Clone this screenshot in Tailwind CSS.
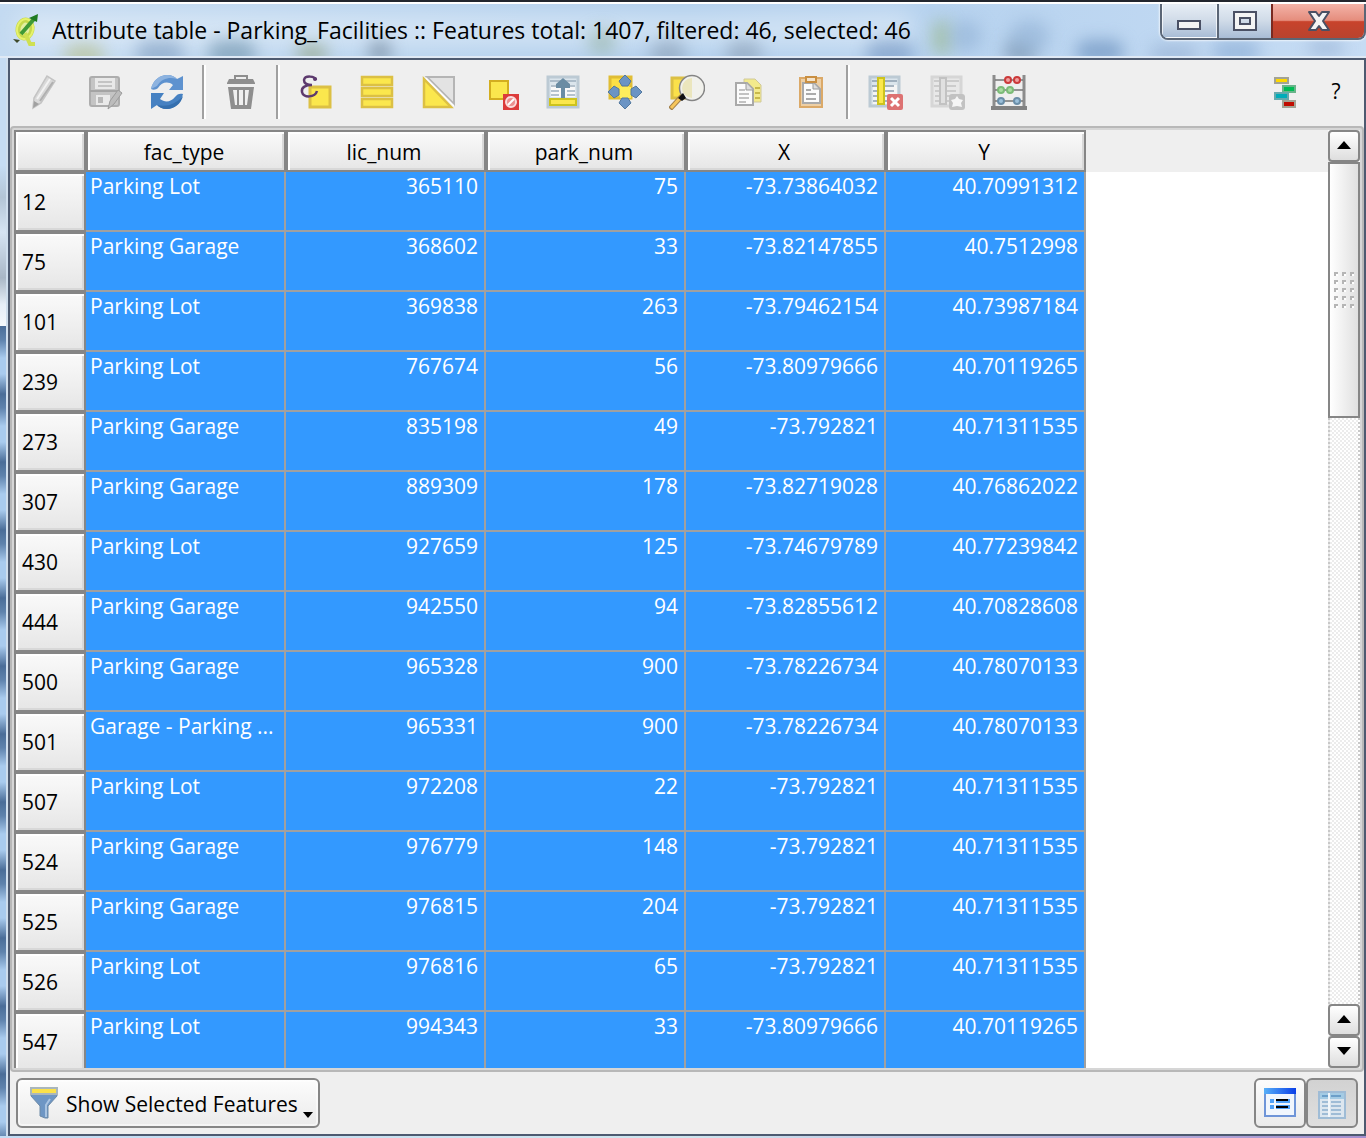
<!DOCTYPE html>
<html lang="en">
<head>
<meta charset="utf-8">
<title>Attribute table - Parking_Facilities</title>
<script src="https://cdn.jsdelivr.net/npm/@tailwindcss/browser@4"></script>
</head>
<body class="flex h-screen flex-col overflow-hidden border-t-2 border-[#22262e] bg-[#b9d3ee] font-['Open_Sans','Noto_Sans',sans-serif] text-black">

<!-- Title bar -->
<header class="relative flex h-14 shrink-0 items-start overflow-hidden border-t-2 border-b-2 border-t-white border-b-[#dfe9f5] bg-linear-to-r from-[#c3daf1] via-[#aecdec] to-[#c6dcf4]">
  <div aria-hidden="true" class="absolute inset-0">
    <div class="absolute top-2 left-4 h-9 w-[900px] rounded-full bg-white/40 blur-md"></div>
    <div class="absolute top-10 left-16 h-6 w-10 rounded-full bg-[#b5bd83]/60 blur-sm"></div>
    <div class="absolute top-9 left-34 h-7 w-12 rounded-full bg-[#6f8fb5]/50 blur-sm"></div>
    <div class="absolute top-9 left-52 h-7 w-12 rounded-full bg-[#6b8fa8]/60 blur-sm"></div>
    <div class="absolute top-10 left-74 h-5 w-8 rounded-full bg-[#8d9f7a]/60 blur-sm"></div>
    <div class="absolute top-9 left-92 h-6 w-6 rounded-full bg-[#6b7f95]/60 blur-sm"></div>
    <div class="absolute top-6 left-[588px] h-7 w-7 rounded-full bg-[#8fae9c]/50 blur-sm"></div>
    <div class="absolute top-9 left-[650px] h-7 w-9 rounded-full bg-[#7f93aa]/50 blur-sm"></div>
    <div class="absolute top-9 left-[726px] h-7 w-9 rounded-full bg-[#7f93aa]/50 blur-sm"></div>
    <div class="absolute top-9 left-[866px] h-7 w-12 rounded-full bg-[#6488b8]/50 blur-sm"></div>
    <div class="absolute top-4 left-[932px] h-9 w-5 rounded-full bg-[#9db98a]/60 blur-sm"></div>
    <div class="absolute top-4 left-[950px] h-8 w-8 rounded-full bg-[#93b3d6]/60 blur-sm"></div>
    <div class="absolute top-9 left-[1004px] h-6 w-8 rounded-full bg-[#6f8aa5]/60 blur-sm"></div>
    <div class="absolute top-4 left-[1010px] h-8 w-10 rounded-full bg-[#93b3d6]/60 blur-sm"></div>
    <div class="absolute top-9 left-[1076px] h-6 w-12 rounded-full bg-[#6f94c0]/70 blur-sm"></div>
    <div class="absolute top-10 left-[1150px] h-5 w-12 rounded-full bg-[#93aed0]/60 blur-sm"></div>
    <div class="absolute top-9 left-[1212px] h-6 w-12 rounded-full bg-[#86a8d2]/60 blur-sm"></div>
    <div class="absolute top-9 left-[1308px] h-4 w-9 rounded-full bg-[#93aed0]/60 blur-sm"></div>
  </div>
  <div class="relative flex h-13 min-w-0 flex-1 items-center gap-3 pl-3">
    <svg class="h-8 w-7 shrink-0" viewBox="0 0 28 32" aria-hidden="true">
      <ellipse cx="13" cy="15" rx="7" ry="9" fill="#e3efa0" stroke="#c6d84c" stroke-width="5" transform="rotate(12 13 15)"/>
      <ellipse cx="13" cy="15" rx="8" ry="10" fill="none" stroke="#e6f26a" stroke-width="2" transform="rotate(12 13 15)"/>
      <path d="M13 19l5 11h5" fill="none" stroke="#cfe052" stroke-width="4"/>
      <path d="M9 20L22 5" stroke="#3f9a35" stroke-width="4"/>
      <path d="M17 4l9-4-1 8z" fill="#1f7a22"/>
      <path d="M1 25l7 1-3 3z" fill="#3e4a2c"/>
    </svg>
    <h1 class="truncate text-[23px] leading-8">Attribute table - Parking_Facilities :: Features total: 1407, filtered: 46, selected: 46</h1>
  </div>
  <div class="relative flex h-9 w-[206px] shrink-0 overflow-hidden rounded-b-lg border-x-2 border-b-2 border-[#5b6676] shadow-[0_0_2px_1px_#ffffffb0]">
    <button aria-label="Minimize" class="flex flex-1 items-center justify-center border border-white/70 bg-linear-to-b from-[#e6edf5] from-0% via-[#d0dbe8] via-49% to-[#a9bdd6] pt-2">
      <svg class="h-3 w-7" viewBox="0 0 28 12"><rect x="3" y="2" width="22" height="8" fill="#f4f4f4" stroke="#4a5064" stroke-width="2"/></svg>
    </button>
    <button aria-label="Maximize" class="flex flex-1 items-center justify-center border-l-2 border-[#5b6676] bg-linear-to-b from-[#e6edf5] from-0% via-[#d0dbe8] via-49% to-[#a9bdd6]">
      <svg class="h-5 w-6" viewBox="0 0 24 20"><path fill="#f4f4f4" fill-rule="evenodd" stroke="#4a5064" stroke-width="2" d="M1 1h22v18H1zM7 7v6h10V7z"/></svg>
    </button>
    <button aria-label="Close" class="flex w-[93px] items-center justify-center border-l-2 border-[#7a2a20] bg-[linear-gradient(#f3b3a8,#e58d7d_48%,#c8432c_52%,#b8432f)]">
      <svg class="h-5 w-6" viewBox="0 0 24 20"><path fill="#f4f4f4" stroke="#4a5064" stroke-width="2" stroke-linejoin="round" d="M2 1h7l3 4 3-4h7l-6 9 6 9h-7l-3-4-3 4H2l6-9z"/></svg>
    </button>
  </div>
</header>

<div class="flex min-h-0 flex-1">
  <!-- Left window edge -->
  <div aria-hidden="true" class="flex w-2 shrink-0 flex-col border-r-2 border-[#cfdeed]">
    <div class="h-[268px] bg-[linear-gradient(#c6dcf3,#c6dcf3_40%,#b3c5d6_52%,#d6e4f3_65%,#a9b7c6_82%,#e6eef7_92%,#f4f8fc)]"></div>
    <div class="flex-1 bg-[repeating-linear-gradient(#4a6d98,#5f83ad_14px,#a9cbee_32px,#a9cbee_48px,#4a6d98_68px)]"></div>
  </div>

  <main class="flex min-w-0 flex-1 flex-col border-2 border-[#4d5a70] bg-[#efefef]">
    <!-- Toolbar -->
    <div role="toolbar" aria-label="Attribute table tools" class="flex h-[66px] shrink-0 items-start pr-2 pl-0.5 [&_button]:flex [&_button]:h-16 [&_button]:w-[62px] [&_button]:items-center [&_button]:justify-center [&_svg]:size-9">
      <button aria-label="Toggle editing mode">
        <svg viewBox="0 0 36 36"><path d="M8 34l1-10L22 2l8 5-14 22z" fill="#d9d9d9" stroke="#c4c4c4" stroke-width="1.5"/><path d="M12 25L25 5" stroke="#f2f2f2" stroke-width="2"/><path d="M15 27L28 8" stroke="#b0b0b0" stroke-width="2"/><path d="M8 34l1-7 5 3z" fill="#a0a0a0"/></svg>
      </button>
      <button aria-label="Save edits">
        <svg viewBox="0 0 36 36"><rect x="3" y="3" width="29" height="29" rx="2" fill="#c4c4c4" stroke="#adadad" stroke-width="2"/><rect x="8" y="4" width="20" height="11" fill="#e9e9e9"/><path d="M11 8h14M11 12h14" stroke="#c4c4c4" stroke-width="2"/><path d="M3 17h29" stroke="#a4a4a4" stroke-width="2"/><rect x="9" y="21" width="14" height="10" fill="#eaeaea"/><rect x="11" y="23" width="5" height="6" fill="#b8b8b8"/><path d="M21 35l2-8 8-11 4 3-8 11z" fill="#bcbcbc" stroke="#9c9c9c"/></svg>
      </button>
      <button aria-label="Reload the table">
        <svg viewBox="0 0 36 36"><path d="M2 15C4 6 11 1 18 1c5 0 8 2 10 4l6-3v14H20l4-5c-5-4-11-3-15 3-2 2-5 2-7 1z" fill="#5e92cf"/><path d="M2 15C4 6 11 1 18 1c5 0 8 2 10 4-7-2-15-1-20 7z" fill="#8db3e0"/><path d="M34 20c-2 9-9 15-16 15-5 0-8-2-10-4l-6 4V19h13l-4 6c5 4 11 3 15-2 2-3 5-4 8-3z" fill="#4681c2"/><path d="M34 22c-2 8-9 13-16 13-5 0-8-2-10-4 9 2 18 0 26-9z" fill="#356fae"/></svg>
      </button>
      <div role="separator" class="flex h-16 w-3 items-center pl-1"><span class="h-[54px] w-1 border-l-2 border-[#a0a0a0] bg-white"></span></div>
      <button aria-label="Delete selected features">
        <svg viewBox="0 0 36 36"><path d="M12 5V2h12v3" fill="none" stroke="#8e8e8e" stroke-width="2"/><path d="M6 5h24l2 4v1H4V9z" fill="#8e8e8e"/><path d="M5 13h26l-3 22H8z" fill="#8e8e8e"/><path d="M10 16l2 15h2V16zM16 16h4v15h-4zM26 16l-2 15h-2V16z" fill="#efefef"/></svg>
      </button>
      <div role="separator" class="flex h-16 w-3 items-center pl-1"><span class="h-[54px] w-1 border-l-2 border-[#a0a0a0] bg-white"></span></div>
      <button aria-label="Select features using an expression">
        <svg viewBox="0 0 36 36"><rect x="13" y="13" width="20" height="20" fill="#fbe74d" stroke="#dcc044" stroke-width="3"/><path d="M19 6C18 2 8 1 7 6c0 4 4 5 8 5-6 0-11 2-10 7 1 6 13 6 15-1" fill="none" stroke="#5d3a6e" stroke-width="2.5"/><circle cx="18" cy="5" r="2" fill="#5d3a6e"/></svg>
      </button>
      <button aria-label="Select all">
        <svg viewBox="0 0 36 36" fill="#fbe74d" stroke="#dcc044" stroke-width="2.5"><rect x="3" y="3" width="30" height="8"/><rect x="3" y="14" width="30" height="8"/><rect x="3" y="25" width="30" height="8"/></svg>
      </button>
      <button aria-label="Invert selection">
        <svg viewBox="0 0 36 36"><path d="M6 3h27v27z" fill="#e3e3e3" stroke="#b5b5b5" stroke-width="2"/><path d="M3 5v28h27z" fill="#fbe74d" stroke="#dcc044" stroke-width="2.5"/><path d="M5 4l28 28" stroke="#fff" stroke-width="1.5"/></svg>
      </button>
      <button aria-label="Unselect all">
        <svg viewBox="0 0 36 36"><rect x="7" y="7" width="18" height="18" fill="#fbe74d" stroke="#d3ae20" stroke-width="2"/><rect x="20" y="20" width="16" height="16" fill="#dc3b3b"/><circle cx="28" cy="28" r="5" fill="#ec8e8e" stroke="#fbdcdc" stroke-width="2"/><path d="M25 31l6-6" stroke="#fff" stroke-width="2"/></svg>
      </button>
      <button aria-label="Move selection to top">
        <svg viewBox="0 0 36 36"><rect x="3" y="3" width="30" height="30" fill="#dbe5ec" stroke="#bccad4" stroke-width="3"/><rect x="6" y="11" width="24" height="12" fill="#f8f8f8"/><path d="M5 7h26M6 12h8M22 12h8M6 17h8M22 17h8M6 21h8M22 21h8" stroke="#9dafbd" stroke-width="1.5"/><path d="M16 24V14h-5v-4l7-6 7 6v4h-5v10z" fill="#6a8ca3"/><rect x="5" y="25" width="26" height="6" fill="#fbe74d" stroke="#cdc31d" stroke-width="2"/></svg>
      </button>
      <button aria-label="Pan map to the selected rows">
        <svg viewBox="0 0 36 36"><rect x="3" y="3" width="21" height="21" fill="#fbdf45" stroke="#e0bd35" stroke-width="3"/><rect x="13" y="13" width="11" height="11" fill="#fdee5c"/><g fill="#6b94c4" stroke="#53799f"><path d="M18 1l6 6-3 5h-6l-3-5zM18 35l6-6-3-5h-6l-3 5zM1 18l6-6 5 3v6l-5 3zM35 18l-6-6-5 3v6l5 3z"/></g></svg>
      </button>
      <button aria-label="Zoom map to the selected rows">
        <svg viewBox="0 0 36 36"><rect x="3" y="4" width="18" height="20" fill="#fbe14a" stroke="#dcc044" stroke-width="3"/><path d="M1 35l12-13" stroke="#a2804a" stroke-width="5"/><path d="M2 34l10-11" stroke="#f7c65c" stroke-width="3"/><circle cx="23" cy="14" r="12.5" fill="#f1f1ec" stroke="#858585" stroke-width="1.5"/><path d="M23 4a10 10 0 0 0 0 20z" fill="#ebe6bd"/><path d="M9 24l5-5 3 5-4 3z" fill="#111"/></svg>
      </button>
      <button aria-label="Copy selected rows to clipboard">
        <svg viewBox="0 0 36 36"><path d="M13 5h11l6 6v17H13z" fill="#f3ea8c" stroke="#d0c99a"/><path d="M24 14h5M24 19h5M24 24h5" stroke="#c8b94a" stroke-width="2"/><path d="M5 9h11l6 6v16H5z" fill="#fbfbfb" stroke="#a9a9a9" stroke-width="2"/><path d="M15 9v7h7" fill="#ddd" stroke="#999"/><path d="M8 16h6M8 20h10M8 24h10M8 28h7" stroke="#b0b0b0" stroke-width="1.5"/></svg>
      </button>
      <button aria-label="Paste features from clipboard">
        <svg viewBox="0 0 36 36"><rect x="7" y="4" width="22" height="29" fill="#edcfa5" stroke="#dba968" stroke-width="2"/><path d="M10 9h11l6 6v14H10z" fill="#fbfbfb" stroke="#a9a9a9" stroke-width="2"/><path d="M20 9v6h6" fill="#ddd" stroke="#999"/><path d="M13 16h5M13 20h10M13 25h10" stroke="#aaa" stroke-width="2"/><path d="M13 8V3h10v5z" fill="#f3e3cb" stroke="#c98f42" stroke-width="2"/></svg>
      </button>
      <div role="separator" class="flex h-16 w-3 items-center pl-1"><span class="h-[54px] w-1 border-l-2 border-[#a0a0a0] bg-white"></span></div>
      <button aria-label="Delete field">
        <svg viewBox="0 0 36 36"><rect x="3" y="3" width="29" height="29" fill="#dbe5ec" stroke="#bccad4" stroke-width="3"/><rect x="6" y="11" width="24" height="19" fill="#f5f5f5"/><path d="M5 7h25M5 12h22M6 17h21M6 22h16M6 27h16" stroke="#8d9fae" stroke-width="1.5"/><rect x="11" y="4" width="6" height="26" fill="#fbe74d" stroke="#cdc31d" stroke-width="2"/><rect x="20" y="20" width="16" height="16" rx="2" fill="#dd7272"/><path d="M24 24l8 8M32 24l-8 8" stroke="#fff" stroke-width="3"/></svg>
      </button>
      <button aria-label="New field">
        <svg viewBox="0 0 36 36"><rect x="3" y="3" width="29" height="29" fill="#e8e8e8" stroke="#d6d6d6" stroke-width="3"/><path d="M5 7h25M5 12h22M6 17h21M6 22h16M6 27h16" stroke="#c2c2c2" stroke-width="1.5"/><rect x="11" y="4" width="6" height="26" fill="#e0e0e0" stroke="#c2c2c2" stroke-width="2"/><rect x="20" y="20" width="16" height="16" rx="3" fill="#c2c2c2"/><path d="M28 22l2 3 4 1-2 3 1 4-5-1-5 1 1-4-2-3 4-1z" fill="#f6f6f6"/></svg>
      </button>
      <button aria-label="Open field calculator">
        <svg viewBox="0 0 36 36"><path d="M3 1v33M33 1v33" stroke="#8c8c8c" stroke-width="3"/><path d="M4 6h28M4 16h28M4 27h28" stroke="#777" stroke-width="1.5"/><rect x="0" y="32" width="36" height="4" fill="#828282"/><g fill="#f0a0a0" stroke="#cb3a3a" stroke-width="2"><circle cx="17" cy="6" r="3"/><circle cx="26" cy="6" r="3"/></g><g fill="#a9dba0" stroke="#7cbb78" stroke-width="2"><circle cx="10" cy="16" r="3"/><circle cx="19" cy="16" r="3"/></g><g fill="#9cc0da" stroke="#6b8ea8" stroke-width="2"><circle cx="10" cy="27" r="3"/><circle cx="26" cy="27" r="3"/></g></svg>
      </button>
      <div class="flex-1"></div>
      <button aria-label="Dock attribute table">
        <svg viewBox="0 0 36 36"><g stroke="#a3a394" stroke-width="2"><rect x="8" y="4" width="13" height="5" fill="#ffd800"/><rect x="16" y="12" width="12" height="6" fill="#00bb55" stroke="#69b48a"/><rect x="8" y="19" width="13" height="6" fill="#00acb8" stroke="#66a9ad"/><rect x="16" y="27" width="12" height="6" fill="#c00c00"/></g></svg>
      </button>
      <div class="flex h-16 w-10 items-center justify-center"><button aria-label="Help" class="text-[21px]">?</button></div>
    </div>

    <!-- Attribute grid with its scroll bar -->
    <div class="flex min-h-0 flex-1 rounded-sm border-2 border-[#b8b8b8] bg-[#d6d6d6] p-0.5">
      <div class="min-w-0 flex-1 overflow-hidden bg-[linear-gradient(#efefef_42px,#ffffff_42px)]">
        <table class="w-[1072px] table-fixed border-separate border-spacing-0 text-[21px] leading-7 [&_tbody_td]:h-[60px] [&_tbody_td]:truncate [&_tbody_td]:border-r-2 [&_tbody_td]:border-b-2 [&_tbody_td]:border-[#a0a0a0] [&_tbody_td]:bg-[#3399ff] [&_tbody_td]:pr-1.5 [&_tbody_td]:pl-1 [&_tbody_td]:text-right [&_tbody_td]:align-top [&_tbody_td]:text-white [&_tbody_td:nth-child(2)]:text-left [&_th]:border-2 [&_th]:border-[#868686] [&_th]:bg-linear-to-b [&_th]:from-[#fafafa] [&_th]:to-[#e6e6e6] [&_th]:font-normal [&_th]:shadow-[inset_2px_2px_0_#ffffff,inset_-2px_-2px_0_#d8d8d8] [&_tbody_th]:px-1.5 [&_tbody_th]:text-left [&_thead_th]:h-[42px] [&_thead_th]:pt-0.5 [&_thead_th]:pr-1 [&_thead_th]:pb-0">
          <colgroup><col class="w-[72px]"><col><col><col><col><col></colgroup>
          <thead><tr><th aria-label="Row"></th><th scope="col">fac_type</th><th scope="col">lic_num</th><th scope="col">park_num</th><th scope="col">X</th><th scope="col">Y</th></tr></thead>
          <tbody>
            <tr><th scope="row">12</th><td>Parking Lot</td><td>365110</td><td>75</td><td>-73.73864032</td><td>40.70991312</td></tr>
            <tr><th scope="row">75</th><td>Parking Garage</td><td>368602</td><td>33</td><td>-73.82147855</td><td>40.7512998</td></tr>
            <tr><th scope="row">101</th><td>Parking Lot</td><td>369838</td><td>263</td><td>-73.79462154</td><td>40.73987184</td></tr>
            <tr><th scope="row">239</th><td>Parking Lot</td><td>767674</td><td>56</td><td>-73.80979666</td><td>40.70119265</td></tr>
            <tr><th scope="row">273</th><td>Parking Garage</td><td>835198</td><td>49</td><td>-73.792821</td><td>40.71311535</td></tr>
            <tr><th scope="row">307</th><td>Parking Garage</td><td>889309</td><td>178</td><td>-73.82719028</td><td>40.76862022</td></tr>
            <tr><th scope="row">430</th><td>Parking Lot</td><td>927659</td><td>125</td><td>-73.74679789</td><td>40.77239842</td></tr>
            <tr><th scope="row">444</th><td>Parking Garage</td><td>942550</td><td>94</td><td>-73.82855612</td><td>40.70828608</td></tr>
            <tr><th scope="row">500</th><td>Parking Garage</td><td>965328</td><td>900</td><td>-73.78226734</td><td>40.78070133</td></tr>
            <tr><th scope="row">501</th><td>Garage - Parking ...</td><td>965331</td><td>900</td><td>-73.78226734</td><td>40.78070133</td></tr>
            <tr><th scope="row">507</th><td>Parking Lot</td><td>972208</td><td>22</td><td>-73.792821</td><td>40.71311535</td></tr>
            <tr><th scope="row">524</th><td>Parking Garage</td><td>976779</td><td>148</td><td>-73.792821</td><td>40.71311535</td></tr>
            <tr><th scope="row">525</th><td>Parking Garage</td><td>976815</td><td>204</td><td>-73.792821</td><td>40.71311535</td></tr>
            <tr><th scope="row">526</th><td>Parking Lot</td><td>976816</td><td>65</td><td>-73.792821</td><td>40.71311535</td></tr>
            <tr><th scope="row">547</th><td>Parking Lot</td><td>994343</td><td>33</td><td>-73.80979666</td><td>40.70119265</td></tr>
          </tbody>
        </table>
      </div>
      <div class="flex w-8 shrink-0 flex-col bg-[repeating-conic-gradient(#ececec_0_25%,#ffffff_0_50%)] bg-size-[4px_4px] [&_button]:flex [&_button]:h-8 [&_button]:shrink-0 [&_button]:items-center [&_button]:justify-center [&_button]:rounded-sm [&_button]:border-2 [&_button]:border-[#868686] [&_button]:bg-linear-to-b [&_button]:from-white [&_button]:to-[#dedede] [&_button]:pb-0.5">
        <button aria-label="Scroll up"><svg class="h-2 w-3.5" viewBox="0 0 14 8"><path d="M7 0l7 8H0z"/></svg></button>
        <div class="flex h-[256px] items-center justify-center border-2 border-[#868686] bg-linear-to-r from-white to-[#e0e0e0]">
          <svg class="h-9 w-5" viewBox="0 0 20 36" aria-hidden="true"><defs><pattern id="grip" width="8" height="8" patternUnits="userSpaceOnUse"><path d="M0 0h4v2H2v2H0z" fill="#b5b5b5"/><path d="M2 2h2v2H2z" fill="#fff"/></pattern></defs><rect width="20" height="36" fill="url(#grip)"/></svg>
        </div>
        <div class="flex-1 border-x-2 border-dotted border-[#c8c8c8]"></div>
        <button aria-label="Page up"><svg class="h-2 w-3.5" viewBox="0 0 14 8"><path d="M7 0l7 8H0z"/></svg></button>
        <button aria-label="Scroll down"><svg class="h-2 w-3.5" viewBox="0 0 14 8"><path d="M0 0h14L7 8z"/></svg></button>
      </div>
    </div>

    <!-- Filter and view switches -->
    <footer class="flex h-[62px] shrink-0 items-center justify-between pr-1.5 pl-1.5">
      <button class="flex h-[50px] items-center gap-2 rounded-md border-2 border-[#868686] bg-linear-to-b from-[#fcfcfc] to-[#ebebeb] pr-1 pl-3 text-[21px] shadow-[inset_0_0_0_2px_#ffffff80]">
        <svg class="h-8 w-7" viewBox="0 0 28 32" aria-hidden="true"><path d="M1 7h26v2L18 19v12h-3l-5-2V19L1 9z" fill="#6e96c4" stroke="#6d8aa6"/><path d="M20 12l-4 6v12" stroke="#a9c4e2" stroke-width="2" fill="none"/><path d="M0 0h28v8H0z" fill="#a9b6bd"/><rect x="2" y="2" width="24" height="4" fill="#fbe14a"/></svg>
        <span class="pt-1">Show Selected Features</span>
        <span class="-ml-1 flex h-full items-end pb-2"><svg class="h-1.5 w-3" viewBox="0 0 12 6" aria-hidden="true"><path d="M1 0h10L6 6z"/></svg></span>
      </button>
      <div class="flex">
        <button aria-label="Switch to form view" class="flex h-[50px] w-[52px] items-center justify-center rounded-md border-2 border-[#868686] bg-linear-to-b from-[#fcfcfc] to-[#ebebeb]">
          <svg class="h-8 w-8" viewBox="0 0 32 32"><defs><linearGradient id="bar"><stop stop-color="#58b0f8"/><stop offset="1" stop-color="#0a3fe8"/></linearGradient></defs><rect x="1" y="2" width="30" height="27" fill="#f1f6fd" stroke="#6f95d8" stroke-width="2"/><rect y="1" width="32" height="6" fill="url(#bar)"/><path d="M6 12h4v4H6zM6 18h4v4H6z" fill="#4ea0f8"/><path d="M12 12h14v4H12zM12 18h14v4H12z" fill="#4ea0f8"/><path d="M12 12h12v2H12zM12 19h12v2H12z"/></svg>
        </button>
        <button aria-label="Switch to table view" aria-pressed="true" class="flex h-[50px] w-[52px] items-center justify-center rounded-md border-2 border-[#868686] bg-linear-to-b from-[#d2d2d2] to-[#dfdfdf] pt-1">
          <svg class="h-7 w-7" viewBox="0 0 28 28"><rect x="1" y="1" width="26" height="26" fill="#dce6ef" stroke="#9fbcd6" stroke-width="2"/><rect x="2" y="2" width="24" height="6" fill="#a4cbe4"/><path d="M4 5h6M13 5h10" stroke="#6c9fc9" stroke-width="2"/><path d="M4 11h6M13 11h10M4 15h6M13 15h10M4 19h6M13 19h10M4 23h6M13 23h10" stroke="#9fbcd6" stroke-width="2"/><path d="M11 2v24" stroke="#f2f6fa" stroke-width="2"/></svg>
        </button>
      </div>
    </footer>
  </main>
</div>
<div aria-hidden="true" class="h-0.5 shrink-0 bg-linear-to-r from-[#c3dcf4] via-[#cfe6ee] to-[#a590d0]"></div>
</body>
</html>
